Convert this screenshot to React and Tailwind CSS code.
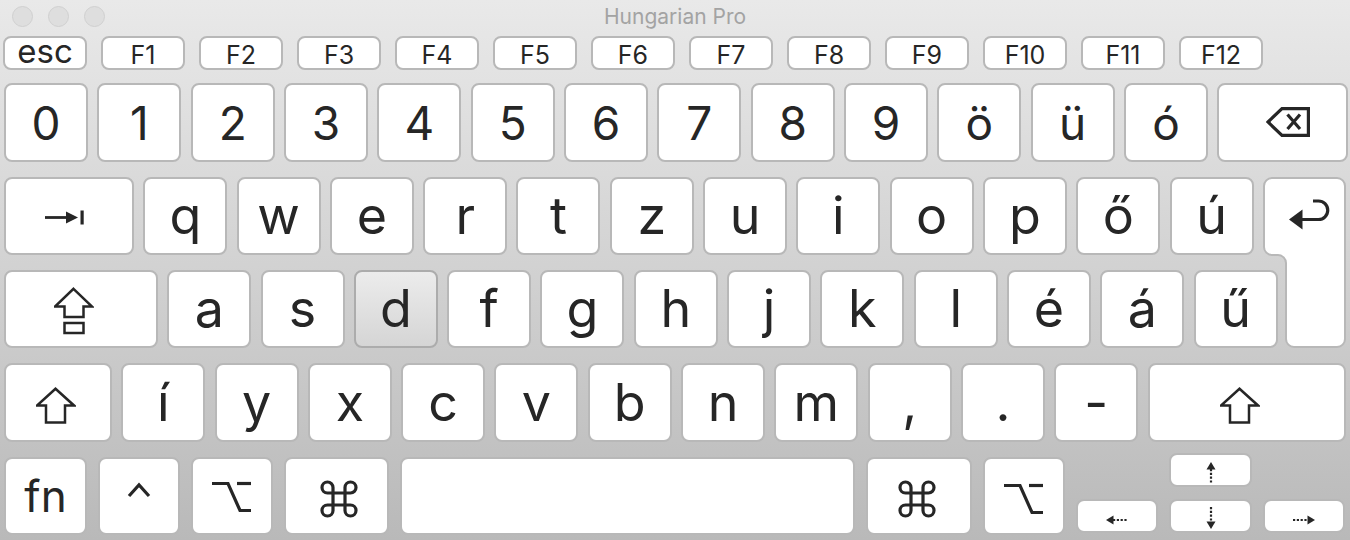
import React from 'react';

const INK = '#262626';

const Key = ({ className = '', pressed = false, children }) => (
  <div
    className={`flex shrink-0 items-center justify-center rounded-[8px] border-2 ${
      pressed
        ? 'border-[#acacac] bg-[linear-gradient(180deg,#ececec,#d5d5d5)]'
        : 'border-[#b8b8b8] bg-white'
    } ${className}`}
  >
    {children}
  </div>
);

const TabIcon = () => (
  <svg width="41" height="15" viewBox="0 0 41 15" className="mr-[8px] mt-[3px]">
    <path d="M0 7.5H23" stroke={INK} strokeWidth="2.8" />
    <path d="M21 1.5L33 7.5L21 13.5Z" fill={INK} />
    <rect x="35.5" y="0.5" width="3.2" height="14" fill={INK} />
  </svg>
);

const CapsIcon = () => (
  <svg width="40" height="48" viewBox="0 0 40 48" className="mr-[15px] mt-[3px]" fill="none" stroke={INK} strokeWidth="2.5">
    <path d="M19.5 1.8L38 19.5H29.5V30H10.5V19.5H1Z" />
    <rect x="10.5" y="36" width="19" height="10" />
  </svg>
);

const ShiftIcon = ({ className }) => (
  <svg width="40" height="37" viewBox="0 0 40 37" className={className} fill="none" stroke={INK} strokeWidth="2.5">
    <path d="M19.5 1.8L38 18.5H29V35.5H10V18.5H1Z" />
  </svg>
);

const BackspaceIcon = () => (
  <svg width="44" height="30" viewBox="0 0 44 30" className="ml-[10px] mb-[2px]" fill="none" stroke={INK} strokeWidth="3.2">
    <path d="M2 15L16 1.6H42.4V28.4H16Z" />
    <path d="M21.5 7.5L34 22M34 7.5L21.5 22" />
  </svg>
);

const OptionIcon = ({ className }) => (
  <svg width="40" height="32" viewBox="0 0 40 32" className={className} fill="none" stroke={INK} strokeWidth="3.2">
    <path d="M0 2.5H16L28 29.5H39" />
    <path d="M25 2.5H39" />
  </svg>
);

const CommandIcon = ({ className }) => (
  <svg width="38" height="38" viewBox="0 0 38 38" className={className} fill="none" stroke={INK} strokeWidth="3.2">
    <path d="M13 13V7.5A5.5 5.5 0 1 0 7.5 13H30.5A5.5 5.5 0 1 0 25 7.5V30.5A5.5 5.5 0 1 0 30.5 25H7.5A5.5 5.5 0 1 0 13 30.5Z" />
  </svg>
);

const CaretIcon = () => (
  <svg width="24" height="16" viewBox="0 0 24 16" className="mb-[12px]" fill="none" stroke={INK} strokeWidth="3.2">
    <path d="M2 14L12 3L22 14" />
  </svg>
);

const ArrowV = ({ down, className }) => (
  <svg width="10" height="22" viewBox="0 0 10 22" className={className}>
    {down ? (
      <>
        <path d="M5 0V15" stroke={INK} strokeWidth="2.2" strokeDasharray="2.2 1.6" />
        <path d="M5 22L9.5 14.5H0.5Z" fill={INK} />
      </>
    ) : (
      <>
        <path d="M5 0L9.5 7.5H0.5Z" fill={INK} />
        <path d="M5 7V22" stroke={INK} strokeWidth="2.2" strokeDasharray="2.2 1.6" />
      </>
    )}
  </svg>
);

const ArrowH = ({ right, className }) => (
  <svg width="22" height="10" viewBox="0 0 22 10" className={className}>
    {right ? (
      <>
        <path d="M0 5H15" stroke={INK} strokeWidth="2.2" strokeDasharray="2.2 1.6" />
        <path d="M22 5L14.5 0.5V9.5Z" fill={INK} />
      </>
    ) : (
      <>
        <path d="M0 5L7.5 0.5V9.5Z" fill={INK} />
        <path d="M7 5H22" stroke={INK} strokeWidth="2.2" strokeDasharray="2.2 1.6" />
      </>
    )}
  </svg>
);

// return key spans two rows, so its outline is drawn
const ReturnKey = () => (
  <svg width="83" height="171" viewBox="0 0 83 171" className="shrink-0">
    <path
      d="M9 1H74A8 8 0 0 1 82 9V162A8 8 0 0 1 74 170H31A8 8 0 0 1 23 162V86A8 8 0 0 0 15 78H9A8 8 0 0 1 1 70V9A8 8 0 0 1 9 1Z"
      fill="#fff"
      stroke="#b8b8b8"
      strokeWidth="2"
    />
    <path d="M26 42.5L39.5 32.5V52.5Z" fill={INK} />
    <path d="M37 42.5H55.5M50 24H55.5A9.25 9.25 0 0 1 55.5 42.5" fill="none" stroke={INK} strokeWidth="3.2" />
  </svg>
);

const fKeys = ['F1', 'F2', 'F3', 'F4', 'F5', 'F6', 'F7', 'F8', 'F9', 'F10', 'F11', 'F12'];
const numRow = ['0', '1', '2', '3', '4', '5', '6', '7', '8', '9', 'ö', 'ü', 'ó'];
const tabRow = ['q', 'w', 'e', 'r', 't', 'z', 'u', 'i', 'o', 'p', 'ő', 'ú'];
const capsRow = ['a', 's', 'd', 'f', 'g', 'h', 'j', 'k', 'l', 'é', 'á', 'ű'];
const shiftRow = ['í', 'y', 'x', 'c', 'v', 'b', 'n', 'm', ',', '.', '-'];

const Letter = ({ children }) => <span className="text-[52px] leading-none">{children}</span>;

export default function App() {
  return (
    <div className="w-[1350px] h-[540px] overflow-hidden bg-[linear-gradient(180deg,#e9e9e9_0%,#d4d4d4_45%,#b9b9b9_100%)] font-['Inter','Liberation_Sans',sans-serif] text-[#262626]">
      {/* title bar */}
      <div className="grid h-[33px] grid-cols-[1fr_auto_1fr] items-center">
        <div className="flex gap-[15px] pl-[12px]">
          <div className="h-[21px] w-[21px] rounded-full border border-[#d0d0d0] bg-[#dedede]" />
          <div className="h-[21px] w-[21px] rounded-full border border-[#d0d0d0] bg-[#dedede]" />
          <div className="h-[21px] w-[21px] rounded-full border border-[#d0d0d0] bg-[#dedede]" />
        </div>
        <div className="text-[21px] leading-none text-[#a3a3a3]">Hungarian Pro</div>
        <div />
      </div>

      {/* function row */}
      <div className="mt-[3px] flex gap-[14px] pl-[3px]">
        <Key className="h-[34px] w-[84px] rounded-[7px]">
          <span className="mb-[3px] text-[33px] leading-none">esc</span>
        </Key>
        {fKeys.map((k) => (
          <Key key={k} className="h-[34px] w-[84px] rounded-[7px]">
            <span className="pt-[4px] text-[25px] leading-none">{k}</span>
          </Key>
        ))}
      </div>

      {/* number row */}
      <div className="mt-[13px] flex h-[79px] gap-[9.33px] pl-[4px]">
        {numRow.map((k) => (
          <Key key={k} className="h-[79px] w-[84px]">
            <span className="text-[46px] leading-none">{k}</span>
          </Key>
        ))}
        <Key className="h-[79px] w-[131px]">
          <BackspaceIcon />
        </Key>
      </div>

      {/* tab + caps rows with return */}
      <div className="mt-[15px] flex gap-[9.3px] pl-[4px]">
        <div className="flex w-[1249.6px] shrink-0 flex-col gap-[15px]">
          <div className="flex h-[78px] gap-[9.3px]">
            <Key className="h-[78px] w-[130px]">
              <TabIcon />
            </Key>
            {tabRow.map((k) => (
              <Key key={k} className="h-[78px] w-[84px]">
                <Letter>{k}</Letter>
              </Key>
            ))}
          </div>
          <div className="flex h-[78px] gap-[9.3px]">
            <Key className="h-[78px] w-[154px]">
              <CapsIcon />
            </Key>
            {capsRow.map((k) => (
              <Key key={k} pressed={k === 'd'} className="h-[78px] w-[84px]">
                <Letter>{k}</Letter>
              </Key>
            ))}
          </div>
        </div>
        <ReturnKey />
      </div>

      {/* shift row */}
      <div className="mt-[15px] flex h-[79px] gap-[9.3px] pl-[4px]">
        <Key className="h-[79px] w-[108px]">
          <ShiftIcon className="mr-[5px] mt-[5px]" />
        </Key>
        {shiftRow.map((k) => (
          <Key key={k} className="h-[79px] w-[84px]">
            <Letter>{k}</Letter>
          </Key>
        ))}
        <Key className="h-[79px] w-[198px]">
          <ShiftIcon className="mr-[13px] mt-[5px]" />
        </Key>
      </div>

      {/* bottom row */}
      <div className="mt-[15px] flex h-[78px] items-end gap-[11px] pl-[4px]">
        <Key className="h-[78px] w-[83px]">
          <span className="text-[44px] leading-none">fn</span>
        </Key>
        <Key className="h-[78px] w-[82px]">
          <CaretIcon />
        </Key>
        <Key className="h-[78px] w-[82px]">
          <OptionIcon className="mt-[2px]" />
        </Key>
        <Key className="h-[78px] w-[105px]">
          <CommandIcon className="ml-[5px] mt-[5px]" />
        </Key>
        <Key className="h-[78px] w-[455px]" />
        <Key className="h-[78px] w-[106px]">
          <CommandIcon className="mt-[5px] mr-[4px]" />
        </Key>
        <Key className="h-[78px] w-[82px]">
          <OptionIcon className="mt-[5px]" />
        </Key>
        <Key className="mb-[2px] h-[34px] w-[82px]">
          <ArrowH className="mt-[8px]" />
        </Key>
        <div className="mb-[2px] flex h-[80px] w-[83px] shrink-0 flex-col justify-between">
          <Key className="h-[34px] w-[83px]">
            <ArrowV className="mt-[5px]" />
          </Key>
          <Key className="h-[34px] w-[83px]">
            <ArrowV down className="mt-[3px]" />
          </Key>
        </div>
        <Key className="mb-[2px] h-[34px] w-[82px]">
          <ArrowH right className="mt-[8px]" />
        </Key>
      </div>
    </div>
  );
}
